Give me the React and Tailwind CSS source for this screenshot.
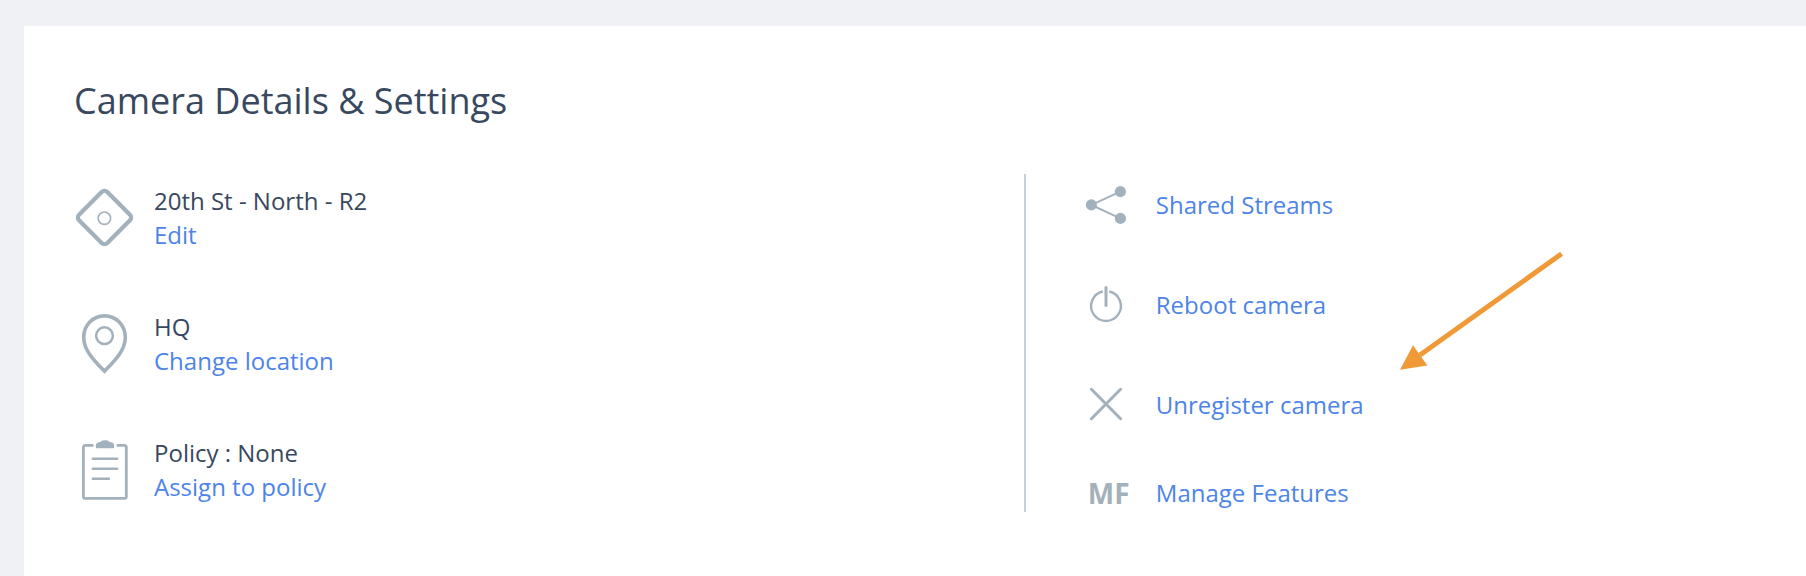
const DeviceIcon = () => (
  <svg className="h-[60px] w-[60px] shrink-0" viewBox="0 0 60 60" fill="none" stroke="#a3b1bc" aria-hidden="true">
    <rect x="10.5" y="9.5" width="40" height="40" rx="4" strokeWidth="4.2" transform="rotate(45 30.5 29.5)" />
    <circle cx="30.4" cy="30.2" r="6.2" strokeWidth="1.6" />
  </svg>
);

const LocationIcon = () => (
  <svg className="h-[60px] w-[60px] shrink-0" viewBox="0 0 60 60" fill="none" stroke="#a3b1bc" aria-hidden="true">
    <path
      d="M30.5 57.2C21 47.5 9.7 36.5 9.7 23.4 9.7 11 19 1.9 30.5 1.9S51.3 11 51.3 23.4C51.3 36.5 40 47.5 30.5 57.2Z"
      strokeWidth="3.6"
    />
    <circle cx="30.5" cy="21.7" r="8.4" strokeWidth="2.5" />
  </svg>
);

const PolicyIcon = () => (
  <svg className="h-[60px] w-[60px] shrink-0" viewBox="0 0 60 60" fill="none" stroke="#a3b1bc" strokeLinecap="round" aria-hidden="true">
    <path d="M18.4 5.4H11.4Q9.4 5.4 9.4 7.4V56.4Q9.4 58.4 11.4 58.4H50.3Q52.3 58.4 52.3 56.4V7.4Q52.3 5.4 50.3 5.4H43.8" strokeWidth="2.8" />
    <path d="M18.8 18.7H43.2M18.8 28.7H43.2M18.8 38.7H35" strokeWidth="2.4" />
    <path
      d="M23 8.2Q21.8 8.2 21.8 7V5.6Q22 2.4 25 2.2Q27 2.1 27.5 1.1Q28 0.2 31 0.2T34.4 1.1Q34.9 2.1 36.9 2.2Q40 2.4 40.2 5.6V7Q40.2 8.2 39 8.2Z"
      fill="#a3b1bc"
      stroke="none"
    />
  </svg>
);

const ShareIcon = () => (
  <svg className="h-[58px] w-11" viewBox="0 0 44 58" fill="none" stroke="#a3b1bc" aria-hidden="true">
    <path d="M36.3 15.6 7.4 28.9 36.3 42.4" strokeWidth="2" />
    <g fill="#a3b1bc" stroke="none">
      <circle cx="7.4" cy="28.9" r="5.6" />
      <circle cx="36.4" cy="15.6" r="5.6" />
      <circle cx="36.4" cy="42.4" r="5.6" />
    </g>
  </svg>
);

const PowerIcon = () => (
  <svg className="h-[58px] w-11" viewBox="0 0 44 58" fill="none" stroke="#a3b1bc" aria-hidden="true">
    <path d="M25.2 15.5A14.9 14.9 0 1 1 18.8 15.5" strokeWidth="2.4" />
    <path d="M22 11.6V29.6" strokeWidth="3" strokeLinecap="round" />
  </svg>
);

const CloseIcon = () => (
  <svg className="h-[58px] w-11" viewBox="0 0 44 58" fill="none" stroke="#a3b1bc" aria-hidden="true">
    <path d="M7.4 13.3 36.6 42.7M36.6 13.3 7.4 42.7" strokeWidth="3" strokeLinecap="round" />
  </svg>
);

const FeaturesIcon = () => (
  <span className="pl-1 text-[28px] leading-[34px] font-bold text-[#a3b1bc]" aria-hidden="true">
    MF
  </span>
);

const details = [
  { label: "20th St - North - R2", action: "Edit", Icon: DeviceIcon },
  { label: "HQ", action: "Change location", Icon: LocationIcon },
  { label: "Policy : None", action: "Assign to policy", Icon: PolicyIcon },
];

const actions = [
  { label: "Shared Streams", Icon: ShareIcon },
  { label: "Reboot camera", Icon: PowerIcon },
  { label: "Unregister camera", Icon: CloseIcon },
  { label: "Manage Features", Icon: FeaturesIcon },
];

export default function App() {
  return (
    <div className="flex min-h-screen flex-col bg-[#f0f1f5] pt-[26px] pl-6 font-['Open_Sans',sans-serif] text-[#38485e]">
      <main className="flex-1 bg-white pt-[51px] pb-16 pl-[50px]">
        <h1 className="text-[36px] leading-[48px]">Camera Details &amp; Settings</h1>
        <div className="mt-[49px] grid grid-cols-[17fr_14fr]">
          <ul className="flex flex-col gap-[58px] pt-[10px]">
            {details.map(({ label, action, Icon }) => (
              <li key={label} className="flex items-center gap-5 text-2xl leading-[34px]">
                <Icon />
                <div>
                  <p>{label}</p>
                  <a href="#" className="block text-[#4d84e8]">
                    {action}
                  </a>
                </div>
              </li>
            ))}
          </ul>
          <div className="relative border-l-2 border-[#c4d0da] pt-[2px] pb-[2px] pl-[58px]">
            <ul className="flex flex-col gap-[42px]">
              {actions.map(({ label, Icon }) => (
                <li key={label}>
                  <a href="#" className="flex items-center gap-6 text-2xl leading-[34px] text-[#4d84e8]">
                    <span className="flex w-12 shrink-0">
                      <Icon />
                    </span>
                    {label}
                  </a>
                </li>
              ))}
            </ul>
            <svg
              className="pointer-events-none absolute top-[76px] left-[374px] h-[122px] w-[164px]"
              viewBox="0 0 164 122"
              aria-hidden="true"
            >
              <path d="M161.6 3.8 20 105" stroke="#f09a37" strokeWidth="5" />
              <path d="M0 119.8 13 95.3 27.4 115.6Z" fill="#f09a37" />
            </svg>
          </div>
        </div>
      </main>
    </div>
  );
}
